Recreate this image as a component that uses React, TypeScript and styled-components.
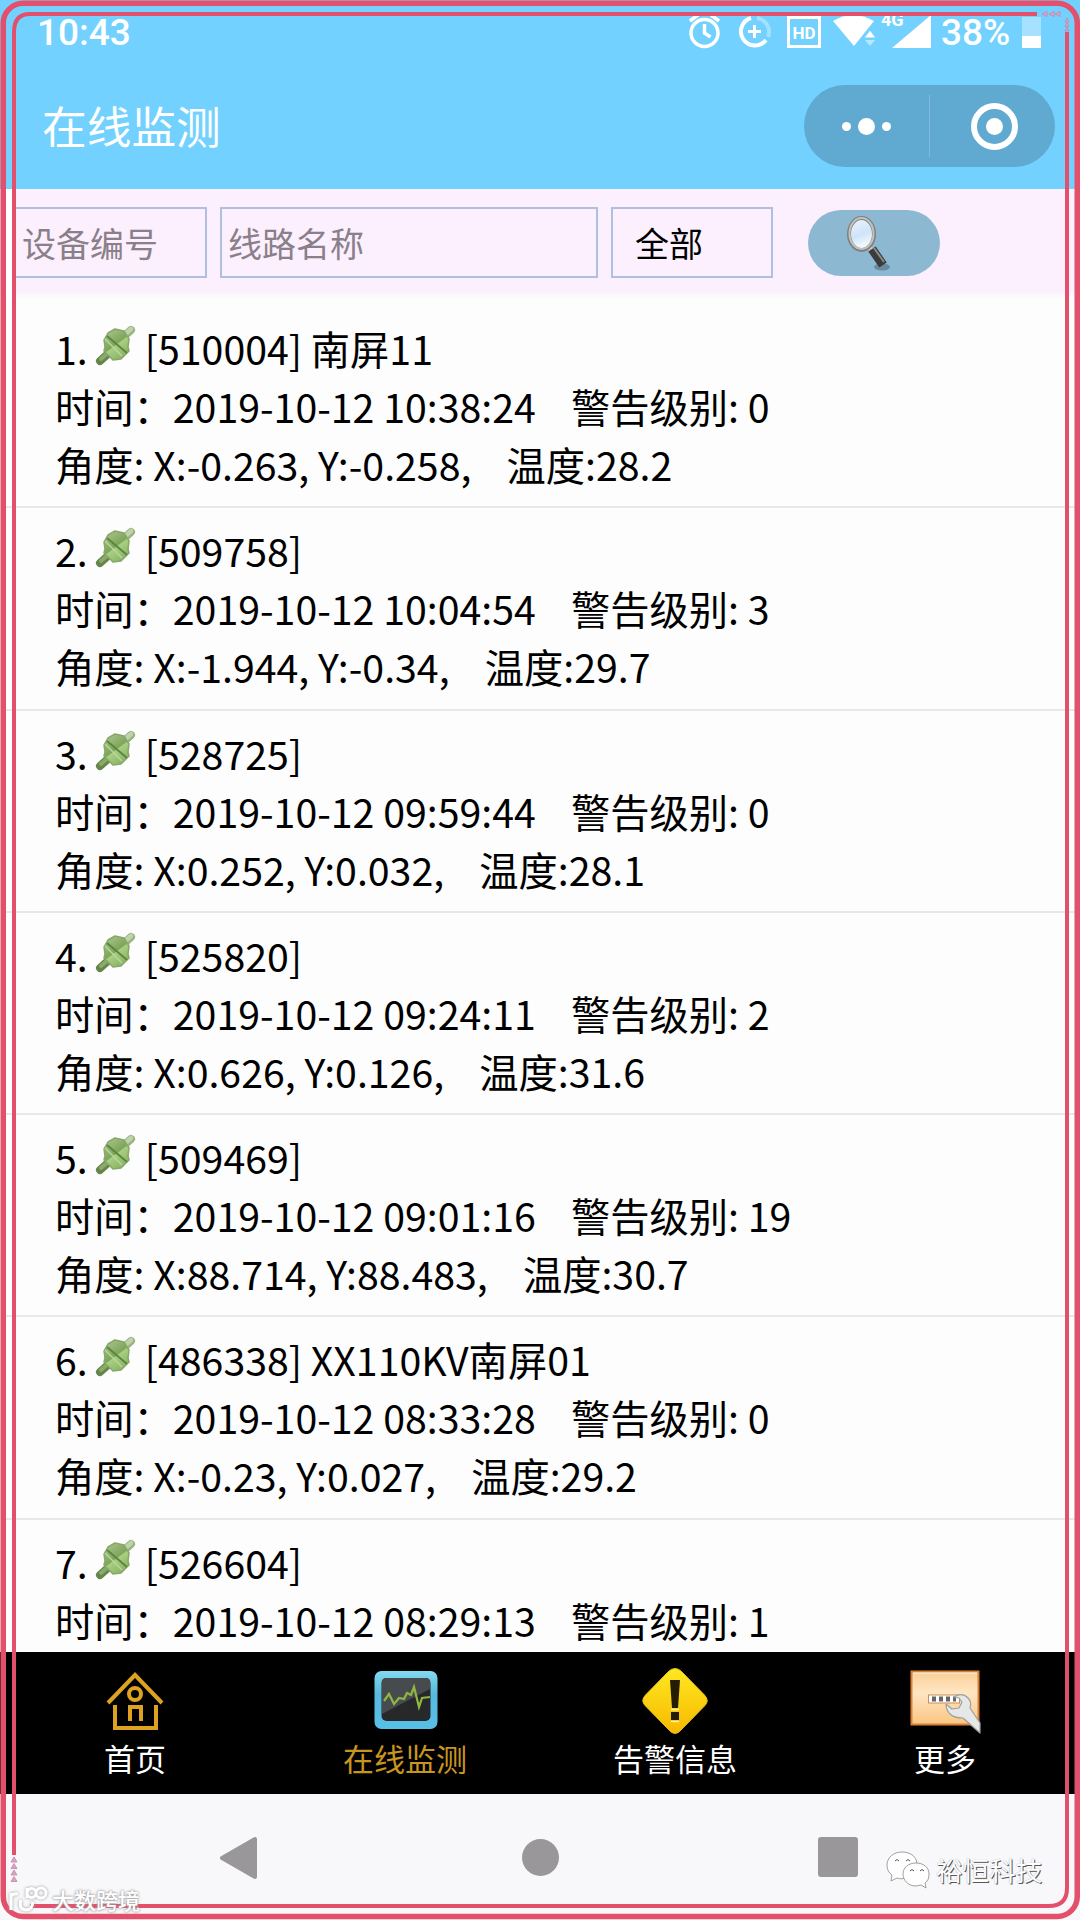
import React from "react";
import styled, { createGlobalStyle } from "styled-components";

const GlobalStyle = createGlobalStyle`
  * {
    box-sizing: border-box;
  }
  body {
    margin: 0;
    background: #fff;
    font-family: "Noto Sans CJK SC", sans-serif;
  }
`;

const StyledPhone = styled.main`
  position: relative;
  width: 1080px;
  height: 1920px;
  display: flex;
  flex-direction: column;
  overflow: hidden;
  background: #fdfdfd;
`;

const StyledHeader = styled.header`
  height: 189px;
  flex: none;
  background: #72d1fe;
  color: #fff;
`;

const StyledStatusBar = styled.div`
  height: 66px;
  padding: 0 39px 0 37px;
  display: flex;
  align-items: center;
  font-family: Roboto, sans-serif;
  font-size: 37px;
  font-weight: 500;
  line-height: 68px;
`;

const StyledStatusIcons = styled.div`
  margin-left: auto;
  display: flex;
  align-items: center;
  svg {
    display: block;
  }
`;

const StyledPercent = styled.span`
  width: 90px;
  padding-left: 9px;
  font-size: 37px;
`;

const StyledTitleBar = styled.div`
  height: 120px;
  padding: 0 25px 0 42px;
  display: flex;
  align-items: center;
  justify-content: space-between;
`;

const StyledTitle = styled.h1`
  margin: -2px 0 0;
  font-size: 44.7px;
  font-weight: 400;
  line-height: 60px;
`;

const StyledCapsule = styled.div`
  width: 251px;
  height: 82px;
  border-radius: 41px;
  background: #60a9d0;
  display: flex;
  align-items: center;
`;

const StyledCapsuleHalf = styled.div<{ $divided?: boolean }>`
  flex: 1;
  height: 62px;
  display: flex;
  align-items: center;
  justify-content: center;
  gap: 7px;
  border-right: ${(p) => (p.$divided ? "1px solid #7cbbdd" : "none")};
`;

const StyledDot = styled.i<{ $size: number }>`
  width: ${(p) => p.$size}px;
  height: ${(p) => p.$size}px;
  border-radius: 50%;
  background: #fff;
`;

const StyledRing = styled.div`
  width: 47px;
  height: 47px;
  margin-left: 4px;
  border: 6px solid #fff;
  border-radius: 50%;
  display: flex;
  align-items: center;
  justify-content: center;
`;

const StyledFilters = styled.form`
  height: 109px;
  flex: none;
  padding: 18px 0 0 14px;
  display: flex;
  align-items: flex-start;
  background: linear-gradient(#fceffe 0 94%, #fdfdfd 100%);
`;

const StyledField = styled.div<{ $width: number; $filled?: boolean }>`
  width: ${(p) => p.$width}px;
  height: 71px;
  margin-right: 13px;
  padding-left: ${(p) => (p.$filled ? 22 : 6)}px;
  border: 2px solid #aebfe0;
  font-size: 34px;
  line-height: 67px;
  color: ${(p) => (p.$filled ? "#000" : "#8a8089")};
`;

const StyledSearch = styled.button`
  width: 132px;
  height: 66px;
  margin: 3px 0 0 22px;
  padding: 0 10px 0 0;
  border: 0;
  border-radius: 33px;
  background: #8db8d2;
  display: flex;
  align-items: center;
  justify-content: center;
`;

const StyledList = styled.ul`
  flex: 1;
  min-height: 0;
  margin: 0;
  padding: 8px 0 0 6px;
  list-style: none;
  overflow: hidden;
`;

const StyledItem = styled.li`
  height: 202.3px;
  padding: 13px 0 0 49px;
  border-bottom: 2px solid #e8e8e8;
  font-size: 39.27px;
  line-height: 58px;
  color: #000;
  white-space: pre;
`;

const StyledLine = styled.div`
  height: 58px;
  display: flex;
`;

const StyledPlug = styled.svg`
  width: 42px;
  height: 44px;
  margin: 5px 8px 0 7px;
`;

const StyledTabs = styled.nav`
  height: 142px;
  flex: none;
  display: grid;
  grid-template-columns: repeat(4, 1fr);
  background: #000;
`;

const StyledTab = styled.a<{ $active?: boolean }>`
  padding-top: 13px;
  display: flex;
  flex-direction: column;
  align-items: center;
  font-size: 31px;
  line-height: 42px;
  color: ${(p) => (p.$active ? "#c8951f" : "#fff")};
  svg {
    width: 76px;
    height: 72px;
  }
`;

const StyledSystemNav = styled.footer`
  height: 126px;
  flex: none;
  display: grid;
  grid-template-columns: 219px 302px 296px 1fr;
  background: #f8f7fa;
  svg {
    grid-row: 1;
    margin-top: 42px;
  }
  svg:nth-child(1) {
    grid-column: 2;
  }
  svg:nth-child(2) {
    grid-column: 3;
  }
  svg:nth-child(3) {
    grid-column: 4;
  }
`;

const StyledAccount = styled.div`
  position: absolute;
  left: 886px;
  top: 1849px;
  display: flex;
  align-items: center;
  gap: 6px;
  font-size: 26.6px;
  font-weight: 400;
  line-height: 42px;
  color: #fff;
  text-shadow: 1px 1px 0 #555, 0 0 1px #999;
`;

const StyledWatermark = styled.div`
  position: absolute;
  left: 8px;
  top: 1884px;
  display: flex;
  align-items: center;
  gap: 3px;
  font-size: 22px;
  font-weight: 500;
  line-height: 30px;
  color: #fff;
  text-shadow: 0 0 3px #999, 0 0 2px #aaa;
  svg {
    filter: drop-shadow(0 0 1.5px #999);
  }
`;

const StyledFrame = styled.svg`
  position: absolute;
  inset: 0;
  width: 1080px;
  height: 1920px;
`;

const StatusIcons = () => (
  <svg width="243" height="50" viewBox="689 8 243 50" fill="none" stroke="#fff">
    <circle cx="704.500" cy="33" r="13.500" strokeWidth="3.500" />
    <path d="M704.500 24v9l6 4M690 21l8-6M719 21l-8-6" strokeWidth="3.500" />
    <path d="M751 18a14 14 0 1 0 15 22" strokeWidth="4" />
    <path d="M757 18a14 14 0 0 1 11 19" strokeWidth="4" opacity=".35" />
    <path d="M754.500 25v13M748 31.500h13" strokeWidth="3" />
    <rect x="788.500" y="17.500" width="31" height="29" strokeWidth="3" />
    <text x="804" y="38.500" textAnchor="middle" fontFamily="Roboto" fontWeight="700" fontSize="17" fill="#fff" stroke="none">
      HD
    </text>
    <path d="M833 21q20-12 41 0l-20 25z" fill="#fff" stroke="none" />
    <path d="M870 30l6 8h-12z" fill="#fff" stroke="#72d1fe" strokeWidth="1" />
    <path d="M870 46l5-6h-10z" fill="#fff" stroke="none" opacity=".5" />
    <text x="881" y="26" fontFamily="Roboto" fontWeight="700" fontSize="18" fill="#fff" stroke="none">
      4G
    </text>
    <path d="M931 15v33h-39z" fill="#fff" stroke="none" />
  </svg>
);

const Battery = () => (
  <svg width="19" height="50" viewBox="0 8 19 50">
    <path d="M0 17h19v19H0z" fill="#a6e2ff" />
    <path d="M0 36h19v12H0z" fill="#fff" />
  </svg>
);

const Magnifier = () => (
  <svg width="46" height="60" viewBox="0 0 46 60">
    <defs>
      <linearGradient id="lens" x1="0" y1="0" x2="0.3" y2="1">
        <stop offset="0" stopColor="#edf7ff" />
        <stop offset=".6" stopColor="#cfe4f8" />
        <stop offset="1" stopColor="#f4fbff" />
      </linearGradient>
    </defs>
    <ellipse cx="36" cy="54" rx="8" ry="3.500" fill="#3d5564" opacity=".45" />
    <path d="M22 33l5 6" stroke="#ccc" strokeWidth="5" />
    <path d="M26 36l11 16" stroke="#3b3b3b" strokeWidth="9" />
    <path d="M28 35l10 14" stroke="#8b8b8b" strokeWidth="2" />
    <ellipse cx="15.500" cy="21" rx="12.500" ry="16" fill="url(#lens)" stroke="#808080" strokeWidth="4" />
    <ellipse cx="15.500" cy="20.500" rx="12" ry="15.500" fill="none" stroke="#c2c2bd" strokeWidth="2" />
  </svg>
);

const Plug = () => (
  <StyledPlug viewBox="0 0 42 44">
    <defs>
      <linearGradient id="plug" x1="0.2" y1="0" x2="0.8" y2="1">
        <stop offset="0" stopColor="#a9c48a" />
        <stop offset=".48" stopColor="#7da55a" />
        <stop offset=".52" stopColor="#a9cf82" />
        <stop offset="1" stopColor="#83ae5c" />
      </linearGradient>
    </defs>
    <path d="M5 37l9-8" stroke="#66854a" strokeWidth="8" strokeLinecap="round" />
    <path d="M6 35l8-7" stroke="#8aaa69" strokeWidth="4" strokeLinecap="round" />
    <path d="M26 15L36 6" stroke="#9ab481" strokeWidth="8" strokeLinecap="round" />
    <path d="M27 13L36 5" stroke="#c0d2ab" strokeWidth="4.500" strokeLinecap="round" />
    <path
      d="M13 9l7-4 9 2 5 8-1 8 1 4-8 8-8 1-9-9 1-4-1-7z"
      fill="url(#plug)"
      stroke="#87a86b"
      strokeWidth="1.500"
      strokeLinejoin="round"
    />
    <path d="M12 12l20 17" stroke="#5b8540" strokeWidth="2" />
    <path d="M10 15l17 17" stroke="#b9d79a" strokeWidth="1.500" />
  </StyledPlug>
);

const HomeIcon = () => (
  <svg viewBox="0 0 76 72" fill="none" stroke="#dda21f" strokeWidth="4">
    <path d="M11 38L38 10l27 28" />
    <path d="M18 40v23h41V40" />
    <path d="M33 56V42h11v14" />
    <circle cx="38" cy="29" r="6" />
  </svg>
);

const MonitorIcon = () => (
  <svg viewBox="0 0 76 72">
    <defs>
      <linearGradient id="bezel" x1="0" y1="0" x2="0" y2="1">
        <stop offset="0" stopColor="#83d9ef" />
        <stop offset=".4" stopColor="#58b9dc" />
        <stop offset="1" stopColor="#57c0e8" />
      </linearGradient>
    </defs>
    <rect x="7.500" y="6" width="63" height="58" rx="7" fill="url(#bezel)" />
    <rect x="14.500" y="13" width="49" height="43" rx="5" fill="#262829" />
    <path d="M15 46V17q0-4 4-4h40q4 0 4 4v7L15 49z" fill="#484b4d" />
    <path
      d="M17 36l5-7 5 10 5-6 5 1 3-6 4 2 3-8 5 20 3-9 8-1"
      fill="none"
      stroke="#91b544"
      strokeWidth="2.200"
    />
  </svg>
);

const AlarmIcon = () => (
  <svg viewBox="0 0 76 72">
    <defs>
      <linearGradient id="sign" x1="0" y1="0" x2="0" y2="1">
        <stop offset="0" stopColor="#ffe820" />
        <stop offset="1" stopColor="#f7b900" />
      </linearGradient>
    </defs>
    <path
      d="M38 3.500Q42 3.500 45 7L67.500 30Q73 36 67.500 41L45 64Q38 73 31 64L8.500 41Q3 36 8.500 30L31 7Q34 3.500 38 3.500z"
      fill="url(#sign)"
      stroke="#e8bd1c"
    />
    <path d="M33 15h10l-2 28h-6zM34 47h8v8h-8z" fill="#241d02" />
    <path d="M34 44.500h8M34 56.500h8" stroke="#fff3a0" strokeWidth="1.500" />
  </svg>
);

const MoreIcon = () => (
  <svg viewBox="0 0 76 72">
    <defs>
      <linearGradient id="panel" x1="0" y1="0" x2="0" y2="1">
        <stop offset="0" stopColor="#f8cf98" />
        <stop offset=".4" stopColor="#ffe6c2" />
        <stop offset="1" stopColor="#fbc583" />
      </linearGradient>
    </defs>
    <rect x="4.500" y="6.500" width="67" height="53" fill="url(#panel)" stroke="#d98135" strokeWidth="2" />
    <path d="M6 8h64" stroke="#fff0d8" strokeWidth="1" />
    <rect x="21.500" y="30" width="31" height="8" fill="#fff" stroke="#c98c54" />
    <path d="M25 34h24" stroke="#666" strokeWidth="5" strokeDasharray="4 3" />
    <path
      d="M47 32q8-5 14 1 4 4 2 10l10 15v10L56 53q-9 0-13-4-4-4-4-10l6 5 7-1 3-6-3-4z"
      fill="#e6e8e8"
      stroke="#9aa19f"
      strokeWidth="1.200"
      strokeLinejoin="round"
    />
  </svg>
);

const WeChatLogo = () => (
  <svg width="44" height="40" viewBox="0 0 44 40">
    <g fill="#fff" stroke="#888" strokeWidth=".8">
      <path d="M16 2C7 2 1 8 1 15c0 5 2 8 5 10l-1 6 6-3c3 1 6 1 9 0 7-2 11-7 11-13C31 7 25 2 16 2z" />
      <path d="M30 13c-8 0-13 5-13 11s5 12 13 12l5-1 5 3-1-5c3-2 4-5 4-9 0-6-5-11-13-11z" />
    </g>
    <path d="M9 11q2-3 4 0M20 11q2-3 4 0M24 21q2-3 4 0M34 21q2-3 4 0" fill="none" stroke="#555" />
  </svg>
);

const Frame = () => (
  <StyledFrame viewBox="0 0 1080 1920" fill="none" stroke="#e3506b">
    <path d="M6 189h6v109H6z" fill="#fff" stroke="none" />
    <rect x="3.250" y="3.250" width="1074" height="1913.250" rx="20" strokeWidth="5.500" />
    <path
      d="M1037 14H30Q14 14 14 32V1855M30 1906H1049Q1067 1906 1067 1888V32"
      strokeWidth="4"
    />
    <g fill="#e9a0b5" stroke="#b58ab5" strokeWidth=".8">
      <path d="M1042 14l5-2.500v5zM1049 14l5-2.500v5zM1055 14l5-2.500v5z" />
      <path d="M1067 18l2 4h-4zM1067 22.500l2 4h-4zM1067 27l2 4h-4z" />
      <path d="M14 1857l3 5h-6zM14 1863.500l3 5h-6zM14 1870l3 5h-6zM14 1876.500l3 5h-6z" />
    </g>
  </StyledFrame>
);

export default function App() {
  const records = [
    { id: "510004", name: " 南屏11", time: "2019-10-12 10:38:24", level: 0, x: "-0.263", y: "-0.258", temp: "28.2" },
    { id: "509758", name: "", time: "2019-10-12 10:04:54", level: 3, x: "-1.944", y: "-0.34", temp: "29.7" },
    { id: "528725", name: "", time: "2019-10-12 09:59:44", level: 0, x: "0.252", y: "0.032", temp: "28.1" },
    { id: "525820", name: "", time: "2019-10-12 09:24:11", level: 2, x: "0.626", y: "0.126", temp: "31.6" },
    { id: "509469", name: "", time: "2019-10-12 09:01:16", level: 19, x: "88.714", y: "88.483", temp: "30.7" },
    { id: "486338", name: " XX110KV南屏01", time: "2019-10-12 08:33:28", level: 0, x: "-0.23", y: "0.027", temp: "29.2" },
    { id: "526604", name: "", time: "2019-10-12 08:29:13", level: 1 },
  ];

  const tabs = [
    { label: "首页", icon: <HomeIcon /> },
    { label: "在线监测", icon: <MonitorIcon />, active: true },
    { label: "告警信息", icon: <AlarmIcon /> },
    { label: "更多", icon: <MoreIcon /> },
  ];

  return (
    <StyledPhone>
      <GlobalStyle />
      <StyledHeader>
        <StyledStatusBar>
          10:43
          <StyledStatusIcons>
            <StatusIcons />
            <StyledPercent>38%</StyledPercent>
            <Battery />
          </StyledStatusIcons>
        </StyledStatusBar>
        <StyledTitleBar>
          <StyledTitle>在线监测</StyledTitle>
          <StyledCapsule>
            <StyledCapsuleHalf $divided>
              <StyledDot $size={9} />
              <StyledDot $size={17} />
              <StyledDot $size={9} />
            </StyledCapsuleHalf>
            <StyledCapsuleHalf>
              <StyledRing>
                <StyledDot $size={17} />
              </StyledRing>
            </StyledCapsuleHalf>
          </StyledCapsule>
        </StyledTitleBar>
      </StyledHeader>

      <StyledFilters>
        <StyledField $width={193}>设备编号</StyledField>
        <StyledField $width={378}>线路名称</StyledField>
        <StyledField $width={162} $filled>
          全部
        </StyledField>
        <StyledSearch type="button" aria-label="搜索">
          <Magnifier />
        </StyledSearch>
      </StyledFilters>

      <StyledList>
        {records.map((record, index) => (
          <StyledItem key={record.id}>
            <StyledLine>
              {index + 1}.<Plug />[{record.id}]{record.name}
            </StyledLine>
            <StyledLine>
              {`时间：${record.time}\u00a0\u00a0\u00a0\u00a0警告级别: ${record.level}`}
            </StyledLine>
            {record.temp && (
              <StyledLine>
                {`角度: X:${record.x}, Y:${record.y},\u00a0\u00a0\u00a0\u00a0温度:${record.temp}`}
              </StyledLine>
            )}
          </StyledItem>
        ))}
      </StyledList>

      <StyledTabs>
        {tabs.map((tab) => (
          <StyledTab key={tab.label} $active={tab.active}>
            {tab.icon}
            {tab.label}
          </StyledTab>
        ))}
      </StyledTabs>

      <StyledSystemNav>
        <svg width="40" height="44" viewBox="0 0 40 44">
          <path d="M3 22L36 3v38z" fill="#999799" stroke="#999799" strokeWidth="4" strokeLinejoin="round" />
        </svg>
        <svg width="40" height="44" viewBox="0 0 40 44">
          <circle cx="19.500" cy="21.500" r="18.500" fill="#999799" />
        </svg>
        <svg width="42" height="44" viewBox="0 0 42 44">
          <rect x="1" y="1" width="40" height="40" rx="3" fill="#999799" />
        </svg>
      </StyledSystemNav>

      <Frame />
      <StyledAccount>
        <WeChatLogo />
        裕恒科技
      </StyledAccount>
      <StyledWatermark>
        <svg width="41" height="28" viewBox="0 0 41 28" fill="none" stroke="#fff" strokeWidth="3">
          <path d="M3 8v17M3 12q2-4 7-3M13 15q-3 9 5 10 6 0 7-8M19 13V3M38 8a5 5 0 1 1-10 0 5 5 0 0 1 10 0M28 8a4.500 4.500 0 1 1-9 0 4.500 4.500 0 0 1 9 0" />
        </svg>
        大数跨境
      </StyledWatermark>
    </StyledPhone>
  );
}
